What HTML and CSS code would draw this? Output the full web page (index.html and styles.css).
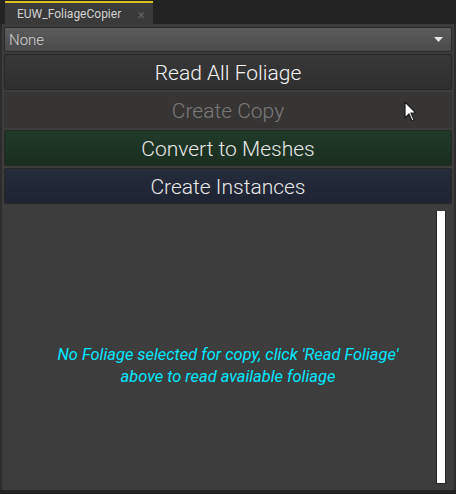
FILE: index.html
```html
<!DOCTYPE html>
<html>
<head>
<meta charset="utf-8">
<link rel="stylesheet" href="styles.css">
</head>
<body>
<div class="window">
  <div class="tabbar">
    <div class="tab">
      <span class="tab-title">EUW_FoliageCopier</span>
      <span class="tab-close">×</span>
    </div>
  </div>
  <div class="panel">
    <div class="combo">
      <span class="combo-text">None</span>
      <svg class="combo-arrow" width="9" height="5" viewBox="0 0 9 5"><path d="M0 0H9L4.5 5Z" fill="#e6e6e6"/></svg>
    </div>
    <div class="buttons">
      <div class="btn btn-default">Read All Foliage</div>
      <div class="btn btn-disabled">Create Copy</div>
      <div class="btn btn-green">Convert to Meshes</div>
      <div class="btn btn-blue">Create Instances</div>
    </div>
    <div class="list">
      <p class="message">No Foliage selected for copy, click 'Read Foliage'<br>above to read available foliage</p>
      <div class="scrollbar"></div>
    </div>
  </div>
</div>
<svg class="cursor" width="14" height="21" viewBox="0 0 14 21"><path d="M1 1V17L5 13L8 20L10 19L7 12H12Z" fill="#ffffff" stroke="#1c1c1c" stroke-width="1.2" stroke-linejoin="round"/></svg>
</body>
</html>
```
FILE: styles.css
```css
html, body {
  margin: 0;
  padding: 0;
  background: #232323;
  width: 456px;
  height: 494px;
  overflow: hidden;
  font-family: Roboto, "Noto Sans", sans-serif;
}
.window {
  display: flex;
  flex-direction: column;
  height: 490px;
}
.tabbar {
  height: 24px;
  display: flex;
  align-items: flex-end;
  padding-left: 5px;
}
.tab {
  border-top: 2px solid #d9c21c;
  background: #3a3a3a;
  display: flex;
  align-items: center;
  padding: 0 8px 0 12px;
  box-sizing: border-box;
  width: 148px;
  height: 23px;
}
.tab-title {
  flex: 1;
  color: #d2d2d2;
  font-size: 12px;
}
.tab-close {
  color: #707070;
  font-size: 15px;
  font-weight: 300;
}
.panel {
  flex: 1;
  background: #3c3c3c;
  border-left: 2px solid #2c2c2c;
  border-right: 2px solid #2c2c2c;
  display: flex;
  flex-direction: column;
  padding: 3px 1px 0 1px;
}
.combo {
  height: 25px;
  margin: 0 1px;
  box-sizing: border-box;
  border: 1px solid #2a2a2a;
  border-radius: 2px;
  background: linear-gradient(#5c5c5c, #4a4a4a);
  display: flex;
  align-items: center;
  padding: 0 8px 0 4px;
}
.combo-text {
  flex: 1;
  color: #d0d0d0;
  font-size: 15px;
  font-weight: 300;
}
.combo-arrow {
  display: block;
}
.buttons {
  display: flex;
  flex-direction: column;
  gap: 2px;
  margin-top: 2px;
}
.btn {
  height: 36px;
  margin: 0 1px;
  padding-top: 1px;
  box-sizing: border-box;
  border: 1px solid #262626;
  border-radius: 2px;
  display: flex;
  align-items: center;
  justify-content: center;
  font-size: 21px;
  font-weight: 300;
  color: #f4f4f4;
}
.btn-default {
  background: linear-gradient(#383838, #2e2e2e);
}
.btn-disabled {
  background: #363534;
  color: #7a7a7a;
  border-color: #333;
}
.btn-green {
  background: linear-gradient(#203a28, #1a2e20);
  color: #e8e8e8;
}
.btn-blue {
  background: linear-gradient(#252c3c, #1e2332);
  color: #e8e8e8;
}
.list {
  flex: 1;
  display: flex;
  align-items: center;
  background: #3d3d3d;
  margin-top: 1px;
  padding: 6px 7px 6px 0;
}
.message {
  flex: 1;
  margin: 0;
  text-align: center;
  font-style: italic;
  font-size: 16.4px;
  line-height: 22px;
  color: #00e8ff;
  padding-top: 36px;
  padding-left: 17px;
}
.scrollbar {
  width: 8px;
  align-self: stretch;
  background: #ffffff;
  border: 1px solid #262626;
  border-top: none;
}
.cursor {
  position: absolute;
  left: 404px;
  top: 101px;
}
```
